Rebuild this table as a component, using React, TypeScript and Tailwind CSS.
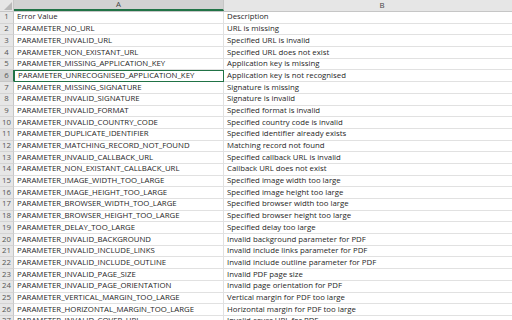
import React from "react";

const rows: [string, string][] = [
  ["Error Value", "Description"],
  ["PARAMETER_NO_URL", "URL is missing"],
  ["PARAMETER_INVALID_URL", "Specified URL is invalid"],
  ["PARAMETER_NON_EXISTANT_URL", "Specified URL does not exist"],
  ["PARAMETER_MISSING_APPLICATION_KEY", "Application key is missing"],
  ["PARAMETER_UNRECOGNISED_APPLICATION_KEY", "Application key is not recognised"],
  ["PARAMETER_MISSING_SIGNATURE", "Signature is missing"],
  ["PARAMETER_INVALID_SIGNATURE", "Signature is invalid"],
  ["PARAMETER_INVALID_FORMAT", "Specified format is invalid"],
  ["PARAMETER_INVALID_COUNTRY_CODE", "Specified country code is invalid"],
  ["PARAMETER_DUPLICATE_IDENTIFIER", "Specified identifier already exists"],
  ["PARAMETER_MATCHING_RECORD_NOT_FOUND", "Matching record not found"],
  ["PARAMETER_INVALID_CALLBACK_URL", "Specified callback URL is invalid"],
  ["PARAMETER_NON_EXISTANT_CALLBACK_URL", "Callback URL does not exist"],
  ["PARAMETER_IMAGE_WIDTH_TOO_LARGE", "Specified image width too large"],
  ["PARAMETER_IMAGE_HEIGHT_TOO_LARGE", "Specified image height too large"],
  ["PARAMETER_BROWSER_WIDTH_TOO_LARGE", "Specified browser width too large"],
  ["PARAMETER_BROWSER_HEIGHT_TOO_LARGE", "Specified browser height too large"],
  ["PARAMETER_DELAY_TOO_LARGE", "Specified delay too large"],
  ["PARAMETER_INVALID_BACKGROUND", "Invalid background parameter for PDF"],
  ["PARAMETER_INVALID_INCLUDE_LINKS", "Invalid include links parameter for PDF"],
  ["PARAMETER_INVALID_INCLUDE_OUTLINE", "Invalid include outline parameter for PDF"],
  ["PARAMETER_INVALID_PAGE_SIZE", "Invalid PDF page size"],
  ["PARAMETER_INVALID_PAGE_ORIENTATION", "Invalid page orientation for PDF"],
  ["PARAMETER_VERTICAL_MARGIN_TOO_LARGE", "Vertical margin for PDF too large"],
  ["PARAMETER_HORIZONTAL_MARGIN_TOO_LARGE", "Horizontal margin for PDF too large"],
  ["PARAMETER_INVALID_COVER_URL", "Invalid cover URL for PDF"],
];

const App = () => {
  return (
    <div className="w-[512px] h-[320px] overflow-hidden bg-white text-[7.8px] leading-none text-[#262626] font-['Open_Sans',sans-serif]">
      <div className="flex h-[12px] bg-[#e6e6e6] border-b border-[#c6c6c6]">
        <div className="relative w-[14px] shrink-0 border-r border-[#c6c6c6]">
          <div className="absolute right-[1px] bottom-[1px] w-0 h-0 border-l-[8px] border-l-transparent border-b-[8px] border-b-[#b8b8b8]" />
        </div>
        <div className="w-[210px] shrink-0 flex items-center justify-center bg-[#d2d2d2] border-r border-[#c6c6c6] border-b-2 border-b-[#217346] text-[#444]">
          A
        </div>
        <div className="w-[316px] shrink-0 flex items-center justify-center text-[#444]">B</div>
      </div>
      {rows.map(([a, b], i) => {
        const sel = i === 5;
        return (
          <div key={i} className="flex h-[11.7px]">
            <div
              className={
                "w-[14px] shrink-0 flex items-center justify-center border-r border-b text-[#555] " +
                (sel ? "bg-[#d2d2d2] border-r-[#217346] border-b-[#c6c6c6]" : "bg-[#e6e6e6] border-r-[#c6c6c6] border-b-[#d4d4d4]")
              }
            >
              {i + 1}
            </div>
            <div
              className={
                "w-[210px] shrink-0 flex items-center pl-[3px] whitespace-nowrap overflow-hidden " +
                (sel ? "border border-[#217346]" : "border-r border-b border-[#e1e1e1]")
              }
            >
              {a}
            </div>
            <div className="w-[316px] shrink-0 flex items-center pl-[3px] whitespace-nowrap overflow-hidden border-b border-[#e1e1e1]">
              {b}
            </div>
          </div>
        );
      })}
    </div>
  );
};

export default App;
